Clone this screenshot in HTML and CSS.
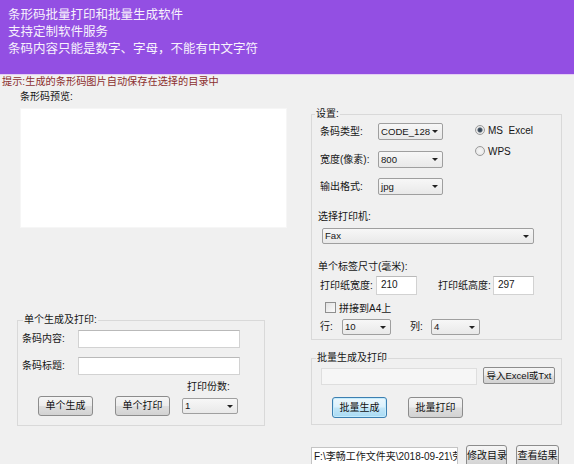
FILE: index.html
```html
<!DOCTYPE html>
<html lang="zh-CN">
<head>
<meta charset="utf-8">
<title>条形码批量打印和批量生成软件</title>
<link rel="stylesheet" href="styles.css">
</head>
<body>
<header class="banner">
  <p>条形码批量打印和批量生成软件</p>
  <p>支持定制软件服务</p>
  <p>条码内容只能是数字、字母，不能有中文字符</p>
</header>
<div class="hint">提示:生成的条形码图片自动保存在选择的目录中</div>
<main class="main">
  <section class="left">
    <div class="preview-label">条形码预览:</div>
    <div class="preview"></div>
    <fieldset class="group single">
      <legend>单个生成及打印:</legend>
      <div class="field-row row-a"><span class="lbl w56">条码内容:</span><div class="input wide"></div></div>
      <div class="field-row row-b"><span class="lbl w56">条码标题:</span><div class="input wide"></div></div>
      <div class="copies-label">打印份数:</div>
      <div class="action-row">
        <button class="btn b-gen">单个生成</button>
        <button class="btn b-print">单个打印</button>
        <div class="select copies"><span>1</span><i class="arrow"></i></div>
      </div>
    </fieldset>
  </section>
  <section class="right">
    <fieldset class="group settings">
      <legend>设置:</legend>
      <div class="settings-top">
        <div class="settings-fields">
          <div class="srow r1"><span class="lbl w58">条码类型:</span><div class="select s65"><span>CODE_128</span><i class="arrow"></i></div></div>
          <div class="srow r2"><span class="lbl w58">宽度(像素):</span><div class="select s65"><span>800</span><i class="arrow"></i></div></div>
          <div class="srow r3"><span class="lbl w58">输出格式:</span><div class="select s65"><span>jpg</span><i class="arrow"></i></div></div>
        </div>
        <div class="radios">
          <div class="radio-row first"><i class="radio checked"></i><span>MS&nbsp; Excel</span></div>
          <div class="radio-row second"><i class="radio"></i><span>WPS</span></div>
        </div>
      </div>
      <div class="sub-title printer-title">选择打印机:</div>
      <div class="select printer"><span>Fax</span><i class="arrow"></i></div>
      <div class="sub-title size-title">单个标签尺寸(毫米):</div>
      <div class="paper-row">
        <span class="lbl w56 ml8">打印纸宽度:</span><div class="input paper">210</div>
        <span class="lbl w55 ml21">打印纸高度:</span><div class="input paper">297</div>
      </div>
      <div class="check-row"><i class="checkbox"></i><span>拼接到A4上</span></div>
      <div class="grid-row">
        <span class="lbl w22 ml8">行:</span><div class="select s49"><span>10</span><i class="arrow"></i></div>
        <span class="lbl w21 ml19">列:</span><div class="select s49"><span>4</span><i class="arrow"></i></div>
      </div>
    </fieldset>
    <fieldset class="group batch">
      <legend>批量生成及打印</legend>
      <div class="import-row">
        <div class="input file-box"></div>
        <button class="btn import">导入Excel或Txt</button>
      </div>
      <div class="batch-row">
        <button class="btn primary b-bgen">批量生成</button>
        <button class="btn b-bprint">批量打印</button>
      </div>
    </fieldset>
    <div class="dir-row">
      <div class="input path">F:\李畅工作文件夹\2018-09-21\劳</div>
      <button class="btn b-change">修改目录</button>
      <button class="btn b-view">查看结果</button>
    </div>
  </section>
</main>
</body>
</html>
```

FILE: styles.css
```css
html, body {
  margin: 0;
  padding: 0;
}
body {
  width: 574px;
  height: 464px;
  overflow: hidden;
  background: #f0f0f0;
  font-family: "Liberation Sans", "Noto Sans CJK SC", sans-serif;
  font-size: 10px;
  color: #161616;
}

/* banner */
.banner {
  box-sizing: border-box;
  height: 75px;
  padding: 5px 8px 0;
  background: #934fe3;
  border-bottom: 1px solid #e4cdf4;
}
.banner p {
  margin: 0;
  font-family: "Noto Sans CJK SC", sans-serif;
  font-size: 12.5px;
  line-height: 17px;
  height: 17px;
  color: #f7f2fc;
}

.hint {
  padding-left: 2px;
  font-size: 10.2px;
  line-height: 13px;
  color: #8c2f2f;
}

.main {
  display: grid;
  grid-template-columns: 290px 284px;
  align-items: start;
}

.lbl { display: inline-block; line-height: 12px; white-space: nowrap; }
.w56 { width: 56px; }
.w55 { width: 55px; }
.w58 { width: 58px; }
.w22 { width: 22px; }
.w21 { width: 21px; }
.ml8 { margin-left: 8px; }
.ml19 { margin-left: 19px; }
.ml21 { margin-left: 21px; }

/* left */
.left { display: flex; flex-direction: column; align-items: flex-start; }
.preview-label {
  margin: 2px 0 0 20px;
  line-height: 14px;
}
.preview {
  margin: 5px 0 0 21px;
  width: 265px;
  height: 118px;
  background: #fff;
  box-shadow: 0 0 0 1px #f6f6f6;
}

.group {
  box-sizing: border-box;
  margin: 0;
  padding: 0;
  min-width: 0;
  border: 1px solid #d9d9d9;
}
.group legend {
  padding: 0 1px;
  line-height: 12px;
  font-size: 10px;
}

.single {
  margin: 87px 0 0 17px;
  width: 248px;
  padding-bottom: 9px;
}
.single legend { margin-left: 5px; }

.field-row {
  display: flex;
  align-items: center;
  height: 18px;
}
.field-row .lbl { margin-left: 4px; }
.row-a { margin-top: 4px; }
.row-b { margin-top: 9px; }

.input {
  box-sizing: border-box;
  background: #fff;
  border: 1px solid #d2d2d2;
  border-top-color: #b9b9b9;
  line-height: 16px;
  padding-left: 3px;
  white-space: nowrap;
  overflow: hidden;
}
.input.wide { width: 162px; height: 18px; }

.copies-label {
  margin: 6px 0 0 169px;
  line-height: 12px;
}
.action-row {
  display: flex;
  align-items: center;
  height: 20px;
  margin-top: 3px;
}

.btn {
  box-sizing: border-box;
  margin: 0;
  padding: 0;
  height: 20px;
  border: 1px solid #8c8c8c;
  border-radius: 3px;
  background: linear-gradient(#f5f5f5 0%, #ececec 48%, #dedede 52%, #d2d2d2 100%);
  font-family: inherit;
  font-size: 10px;
  color: #111;
  white-space: nowrap;
  line-height: 1;
}
.btn.primary {
  border-color: #3c7fb1;
  background: linear-gradient(#ecf7fd 0%, #dbf1fc 48%, #c2e6f8 52%, #a9daf3 100%);
  box-shadow: inset 0 0 0 1px #c6ecfc;
}
.b-gen { margin-left: 20px; width: 55px; }
.b-print { margin-left: 22px; width: 55px; }

.select {
  box-sizing: border-box;
  display: flex;
  align-items: center;
  border: 1px solid #9f9f9f;
  border-radius: 2px;
  background: linear-gradient(#f7f7f7, #e9e9e9);
  padding: 0 4px 0 2px;
  white-space: nowrap;
}
.select span {
  flex: 1;
  min-width: 0;
  line-height: 12px;
  font-size: 9.6px;
}
.arrow {
  flex: none;
  width: 0;
  height: 0;
  margin-left: 2px;
  border-left: 3px solid transparent;
  border-right: 3px solid transparent;
  border-top: 3px solid #222;
}
.copies { margin-left: 12px; width: 56px; height: 16px; }

/* right */
.right { display: flex; flex-direction: column; align-items: flex-start; }
.settings {
  margin: 20px 0 0 21px;
  width: 251px;
  padding-bottom: 4px;
}
.settings legend { margin-left: 3px; }

.settings-top { display: flex; align-items: flex-start; }
.srow { display: flex; align-items: center; height: 17px; }
.srow .lbl { margin-left: 8px; }
.r1 { margin-top: 3px; }
.r2 { margin-top: 11px; }
.r3 { margin-top: 10px; }
.s65 { width: 65px; height: 17px; }
.s49 { width: 49px; height: 16px; }

.radios { margin-left: 32px; }
.radio-row { display: flex; align-items: center; height: 14px; }
.radio-row.first { margin-top: 3px; }
.radio-row.second { margin-top: 7px; }
.radio {
  box-sizing: border-box;
  width: 10px;
  height: 10px;
  margin-right: 3px;
  border-radius: 50%;
  border: 1px solid #9a9a9a;
  background: radial-gradient(circle, #f7f7f7 0, #e2e2e2 100%);
}
.radio.checked {
  background: radial-gradient(circle, #2c3b4a 0, #4a5a6a 2px, #e6e6e6 3px, #f3f3f3 100%);
}

.sub-title { margin-left: 6px; line-height: 12px; }
.printer-title { margin-top: 16px; }
.printer { margin: 5px 0 0 10px; width: 212px; height: 16px; }
.size-title { margin-top: 17px; }

.paper-row { display: flex; align-items: center; height: 19px; margin-top: 3px; }
.input.paper { width: 41px; height: 19px; line-height: 15px; padding-left: 4px; }

.check-row { display: flex; align-items: center; height: 12px; margin-top: 6px; }
.checkbox {
  box-sizing: border-box;
  width: 11px;
  height: 11px;
  margin-left: 13px;
  margin-right: 3px;
  border: 1px solid #8f8f8f;
  background: linear-gradient(135deg, #e2e2e2, #fbfbfb);
}

.grid-row { display: flex; align-items: center; height: 16px; margin-top: 6px; }

.batch {
  margin: 12px 0 0 21px;
  width: 251px;
  padding-bottom: 6px;
}
.batch legend { margin-left: 4px; }
.import-row { display: flex; align-items: flex-start; margin-top: 3px; }
.file-box {
  margin: 1px 0 0 9px;
  width: 156px;
  height: 17px;
  background: #f6f6f6;
  border-color: #dedede;
}
.import {
  margin-left: 6px;
  width: 72px;
  height: 17px;
  font-size: 9.5px;
  border-radius: 2px;
}
.batch-row { display: flex; align-items: center; margin-top: 12px; }
.batch-row .btn { height: 21px; width: 55px; }
.b-bgen { margin-left: 20px; }
.b-bprint { margin-left: 21px; }

.dir-row { display: flex; align-items: flex-start; margin-top: 20px; }
.input.path {
  margin: 2px 0 0 21px;
  width: 147px;
  height: 22px;
  padding-left: 2px;
  line-height: 17px;
  border-color: #c4c4c4;
}
.b-change { margin-left: 8px; width: 41px; height: 22px; }
.b-view { margin-left: 9px; width: 43px; height: 22px; }
```
